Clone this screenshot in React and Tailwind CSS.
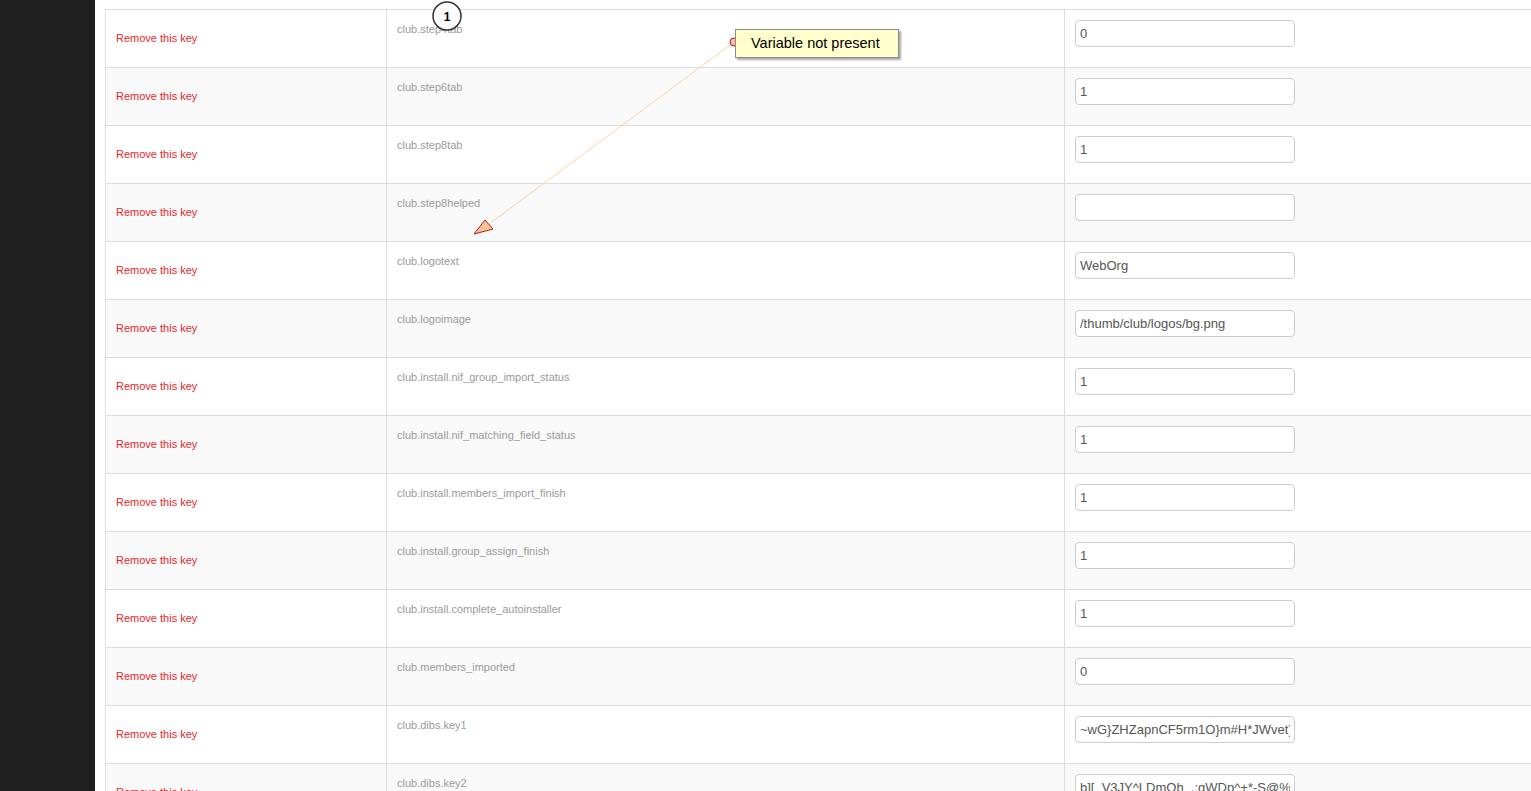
import React from "react";

const rows = [
  { key: "club.step4tab", value: "0" },
  { key: "club.step6tab", value: "1" },
  { key: "club.step8tab", value: "1" },
  { key: "club.step8helped", value: "" },
  { key: "club.logotext", value: "WebOrg" },
  { key: "club.logoimage", value: "/thumb/club/logos/bg.png" },
  { key: "club.install.nif_group_import_status", value: "1" },
  { key: "club.install.nif_matching_field_status", value: "1" },
  { key: "club.install.members_import_finish", value: "1" },
  { key: "club.install.group_assign_finish", value: "1" },
  { key: "club.install.complete_autoinstaller", value: "1" },
  { key: "club.members_imported", value: "0" },
  { key: "club.dibs.key1", value: "~wG}ZHZapnCF5rm1O}m#H*JWvet)l[" },
  { key: "club.dibs.key2", value: "b][_V3JY^LDmQh_,:gWDp^+*-S@%:" },
];

const KeyRow = ({ row, index }) => (
  <div
    className={`grid grid-cols-[281px_678px_1fr] h-[58px] border-b border-[#dddddd] ${
      index % 2 === 1 ? "bg-[#f9f9f9]" : "bg-white"
    }`}
  >
    <div className="flex items-center px-[10px] pb-[2px] border-r border-[#dddddd]">
      <a className="text-[11px] leading-[14px] text-[#e3262b] cursor-pointer">Remove this key</a>
    </div>
    <div className="px-[10px] pt-[6px] border-r border-[#dddddd]">
      <span className="text-[11px] leading-[14px] text-[#999999]">{row.key}</span>
    </div>
    <div className="px-[10px] pt-[10px]">
      <input
        type="text"
        readOnly
        value={row.value}
        className="w-[220px] h-[27px] px-[4px] bg-white border border-[#cccccc] rounded-[4px] text-[13px] text-[#555555] outline-none"
      />
    </div>
  </div>
);

export default function App() {
  return (
    <div
      className="relative h-[791px] overflow-hidden bg-white flex"
      style={{ fontFamily: '"Liberation Sans", Arial, sans-serif' }}
    >
      {/* Sidebar */}
      <div className="w-[95px] shrink-0 bg-[#202020]" />

      {/* Key table */}
      <div className="flex-1 pl-[10px] pt-[9px]">
        <div className="border-t border-l border-[#dddddd]">
          {rows.map((row, i) => (
            <KeyRow key={row.key} row={row} index={i} />
          ))}
        </div>
      </div>

      {/* Annotation overlay */}
      <svg className="absolute inset-0 pointer-events-none" width="1531" height="791">
        <line x1="734" y1="42" x2="488" y2="225" stroke="#fccfa6" strokeWidth="1" />
        <polygon points="474,234 485,220 493,229" fill="#fdc49a" stroke="#b3191c" strokeWidth="1" />
        <circle cx="734" cy="42" r="4" fill="#f9bfa3" stroke="#b3191c" strokeWidth="1" />
        <circle cx="447" cy="16" r="14" fill="#ffffff" stroke="#333333" strokeWidth="1.5" />
        <text x="447" y="20.5" textAnchor="middle" fontSize="12" fontWeight="bold" fill="#000" fontFamily="Liberation Sans, Arial, sans-serif">1</text>
      </svg>
      <div className="absolute left-[735px] top-[29px] w-[164px] h-[29px] bg-[#ffffcc] border border-[#8a8a8a] shadow-[2px_2px_2px_rgba(0,0,0,0.35)] flex items-center pl-[15px] text-[14.5px] text-black">
        Variable not present
      </div>
    </div>
  );
}
